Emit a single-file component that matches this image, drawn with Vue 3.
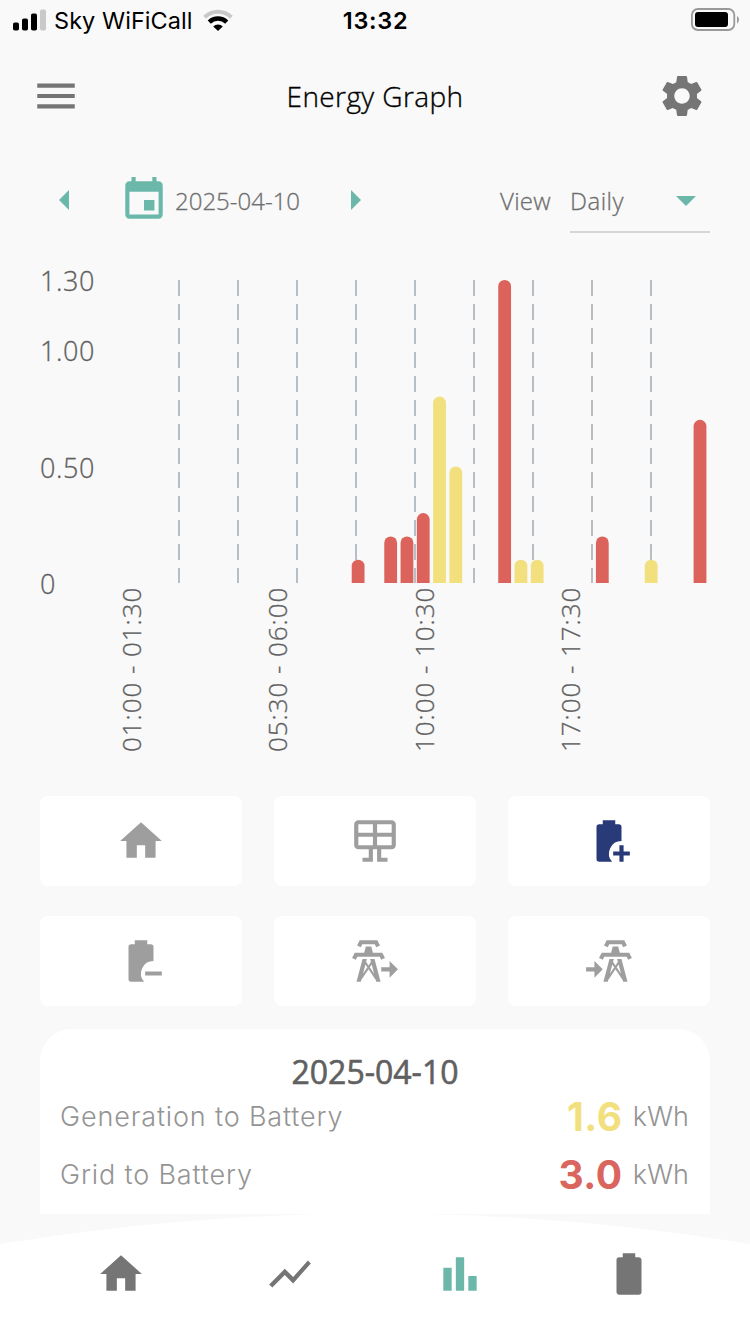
<template>
  <div class="screen">
    <div class="status-bar">
      <div class="carrier">
        <svg class="signal" width="34" height="22" viewBox="0 0 34 22">
          <rect x="0" y="13.5" width="6" height="8" rx="1.8" />
          <rect x="9" y="9.5" width="6" height="12" rx="1.8" />
          <rect x="18" y="4.5" width="6" height="17" rx="1.8" />
          <rect x="27" y="0.5" width="6" height="21" rx="1.8" fill="#c9c9c9" />
        </svg>
        <span class="carrier-name">Sky WiFiCall</span>
        <svg class="wifi" width="30" height="22" viewBox="0 0 30 22">
          <path d="M1.6 8.2A19.2 19.2 0 0 1 28.4 8.2" fill="none" stroke="#c9c9c9" stroke-width="4" />
          <path d="M6.3 13.1A12.4 12.4 0 0 1 23.7 13.1" fill="none" stroke="#000" stroke-width="4.4" />
          <path d="M10.2 17.4A6.8 6.8 0 0 1 19.8 17.4L15 22Z" />
        </svg>
      </div>
      <span class="clock">13:32</span>
      <svg class="battery" width="48" height="24" viewBox="0 0 48 24">
        <rect x="0.9" y="1" width="42.4" height="21" rx="6" fill="none" stroke="#999" stroke-width="1.8" />
        <rect x="4" y="4" width="33" height="15" rx="3" />
        <path d="M46 8C48.6 9.6 48.6 13.8 46 15.4Z" fill="#999" />
      </svg>
    </div>

    <header class="header">
      <button class="icon-button">
        <svg class="icon" viewBox="0 0 24 24"><path :d="icons.menu" /></svg>
      </button>
      <h1>Energy Graph</h1>
      <button class="icon-button">
        <svg class="icon" viewBox="0 0 24 24"><path :d="icons.cog" /></svg>
      </button>
    </header>

    <div class="controls">
      <button class="icon-button arrow" @click="moveDay(-1)">
        <svg width="10" height="20" viewBox="0 0 10 20"><path d="M10 0V20L0 10Z" /></svg>
      </button>
      <div class="date">
        <svg class="icon" viewBox="0 0 24 24"><path :d="icons.calendar" /></svg>
        <span>{{ dateText }}</span>
      </div>
      <button class="icon-button arrow" @click="moveDay(1)">
        <svg width="10" height="20" viewBox="0 0 10 20"><path d="M0 0V20L10 10Z" /></svg>
      </button>
      <span class="view-label">View</span>
      <div class="select">
        <span>Daily</span>
        <svg width="20" height="10" viewBox="0 0 20 10"><path d="M0 0H20L10 10Z" /></svg>
      </div>
    </div>

    <svg class="chart" width="750" height="520" viewBox="0 0 750 520">
      <text v-for="tick in yTicks" :key="tick" x="40" :y="yFor(tick) + 11.3" class="y-label">
        {{ tick === 0 ? '0' : tick.toFixed(2) }}
      </text>
      <line
        v-for="n in 9"
        :key="n"
        :x1="120 + n * 59"
        :x2="120 + n * 59"
        :y1="plotTop"
        :y2="plotBottom"
        class="grid-line"
      />
      <path v-for="bar in bars" :key="bar.slot" :d="barPath(bar)" :class="bar.source" />
      <text
        v-for="label in xLabels"
        :key="label.text"
        :transform="`translate(${slotX(label.slot) + 10.6} 492) rotate(-90)`"
        class="x-label"
      >
        {{ label.text }}
      </text>
    </svg>

    <div class="tiles">
      <button
        v-for="tile in tiles"
        :key="tile"
        :class="['tile', { active: tile === selectedTile }]"
        @click="selectedTile = tile"
      >
        <svg class="icon" viewBox="0 0 24 24"><path fill-rule="evenodd" :d="icons[tile]" /><path v-if="arrows[tile]" :d="arrows[tile]" /></svg>
      </button>
    </div>

    <section class="summary">
      <h2>{{ dateText }}</h2>
      <div v-for="row in totals" :key="row.label" class="row">
        <span class="row-label">{{ row.label }}</span>
        <span :class="['row-value', row.source]">{{ row.value }}</span>
        <span class="row-unit">kWh</span>
      </div>
    </section>

    <svg class="nav-curve" width="750" height="30" viewBox="0 0 750 30">
      <path d="M0 30Q375 -31 750 30Z" fill="#fff" />
    </svg>
    <nav class="nav">
      <button
        v-for="item in navItems"
        :key="item"
        :class="['icon-button', { current: item === currentPage }]"
        @click="currentPage = item"
      >
        <svg class="icon" viewBox="0 0 24 24"><path :d="icons[item]" /></svg>
      </button>
    </nav>
  </div>
</template>

<script setup>
import { ref, computed } from 'vue';

const tower =
  'M8.28,5.45L6.5,4.55L7.76,2H16.23L17.5,4.55L15.72,5.44L15,4H9L8.28,5.45M18.62,8H14.09L13.3,5H10.7L9.91,8H5.38L4.1,10.55L5.89,11.44L6.62,10H17.38L18.1,11.45L19.89,10.56L18.62,8M17.77,22H15.7L15.46,21.1L12,15.9L8.53,21.1L8.3,22H6.23L9.12,11H11.19L10.83,12.35L12,14.1L13.16,12.35L12.81,11H14.88L17.77,22M11.4,15L10.5,13.65L9.32,18.13L11.4,15M14.68,18.12L13.5,13.64L12.6,15L14.68,18.12Z';

// Shift an absolute path sideways, used to make room for the grid arrows
function shiftPath(d, dx) {
  return d.replace(/([MLHV])([\d.]+)(,[\d.]+)?/g, (m, cmd, x, y) =>
    cmd === 'V' ? m : `${cmd}${(Number(x) + dx).toFixed(2)}${y || ''}`
  );
}

const cutBattery =
  'M7.33 4H9V2H15V4H16.67A1.33 1.33 0 0 1 18 5.33V12A6 6 0 0 0 13.53 22H7.33A1.33 1.33 0 0 1 6 20.67V5.33A1.33 1.33 0 0 1 7.33 4Z';

const icons = {
  menu: 'M3,6H21V8H3V6M3,11H21V13H3V11M3,16H21V18H3V16Z',
  cog: 'M19.14 12.94c.04-.3.06-.61.06-.94 0-.32-.02-.64-.07-.94l2.03-1.58c.18-.14.23-.41.12-.61l-1.92-3.32c-.12-.22-.37-.29-.59-.22l-2.39.96c-.5-.38-1.03-.7-1.62-.94l-.36-2.54c-.04-.24-.24-.41-.48-.41h-3.84c-.24 0-.43.17-.47.41l-.36 2.54c-.59.24-1.13.57-1.62.94l-2.39-.96c-.22-.08-.47 0-.59.22L2.74 8.87c-.12.21-.08.47.12.61l2.03 1.58c-.05.3-.09.63-.09.94s.02.64.07.94l-2.03 1.58c-.18.14-.23.41-.12.61l1.92 3.32c.12.22.37.29.59.22l2.39-.96c.5.38 1.03.7 1.62.94l.36 2.54c.05.24.24.41.48.41h3.84c.24 0 .44-.17.47-.41l.36-2.54c.59-.24 1.13-.56 1.62-.94l2.39.96c.22.08.47 0 .59-.22l1.92-3.32c.12-.22.07-.47-.12-.61l-2.01-1.58zM12 15.7c-2.04 0-3.7-1.66-3.7-3.7s1.66-3.7 3.7-3.7 3.7 1.66 3.7 3.7-1.66 3.7-3.7 3.7z',
  calendar: 'M19,19H5V8H19M16,1V3H8V1H6V3H5C3.89,3 3,3.89 3,5V19A2,2 0 0,0 5,21H19A2,2 0 0,0 21,19V5C21,3.89 20.1,3 19,3H18V1M17,12H12V17H17V12Z',
  home: 'M10,20V14H14V20H19V12H22L12,3L2,12H5V20H10Z',
  solar: 'M4,2H20A2,2 0 0,1 22,4V14A2,2 0 0,1 20,16H15V20H18V22H13V16H11V22H6V20H9V16H4A2,2 0 0,1 2,14V4A2,2 0 0,1 4,2M4,4V8H11V4H4M4,14H11V10H4V14M20,14V10H13V14H20M20,4H13V8H20V4Z',
  charge: cutBattery + 'M17 14H19V17H22V19H19V22H17V19H14V17H17Z',
  discharge: cutBattery + 'M14 17H22V19H14Z',
  gridExport: shiftPath(tower, -3.1),
  gridImport: shiftPath(tower, 3.1),
  line: 'M3.5,18.5L9.5,12.5L13.5,16.5L22,6.92L20.59,5.5L13.5,13.5L9.5,9.5L2,17L3.5,18.5Z',
  graph: 'M4 9H8V20H4ZM10 4H14V20H10ZM16 13H20V20H16Z',
  battery: 'M16.67,4H15V2H9V4H7.33A1.33,1.33 0 0,0 6,5.33V20.67C6,21.4 6.6,22 7.33,22H16.67A1.33,1.33 0 0,0 18,20.67V5.33C18,4.6 17.4,4 16.67,4Z',
};

const arrows = {
  gridExport: 'M15 15H19V12L23 16L19 20V17H15Z',
  gridImport: 'M1 15H5V12L9 16L5 20V17H1Z',
};

const tiles = ['home', 'solar', 'charge', 'discharge', 'gridExport', 'gridImport'];
const selectedTile = ref('charge');

const navItems = ['home', 'line', 'graph', 'battery'];
const currentPage = ref('graph');

const date = ref(new Date(Date.UTC(2025, 3, 10)));
const dateText = computed(() => date.value.toISOString().slice(0, 10));

function moveDay(step) {
  const next = new Date(date.value);
  next.setUTCDate(next.getUTCDate() + step);
  date.value = next;
}

const plotTop = 20;
const plotBottom = 323;
const maxValue = 1.3;
const barWidth = 12.8;
const yTicks = [1.3, 1, 0.5, 0];

const bars = [
  { slot: 14, value: 0.1, source: 'grid' },
  { slot: 16, value: 0.2, source: 'grid' },
  { slot: 17, value: 0.2, source: 'grid' },
  { slot: 18, value: 0.3, source: 'grid' },
  { slot: 19, value: 0.8, source: 'generation' },
  { slot: 20, value: 0.5, source: 'generation' },
  { slot: 23, value: 1.3, source: 'grid' },
  { slot: 24, value: 0.1, source: 'generation' },
  { slot: 25, value: 0.1, source: 'generation' },
  { slot: 29, value: 0.2, source: 'grid' },
  { slot: 32, value: 0.1, source: 'generation' },
  { slot: 35, value: 0.7, source: 'grid' },
];

const xLabels = [
  { slot: 0, text: '01:00 - 01:30' },
  { slot: 9, text: '05:30 - 06:00' },
  { slot: 18, text: '10:00 - 10:30' },
  { slot: 27, text: '17:00 - 17:30' },
];

const totals = [
  { label: 'Generation to Battery', value: '1.6', source: 'generation' },
  { label: 'Grid to Battery', value: '3.0', source: 'grid' },
];

function yFor(value) {
  return plotBottom - (value / maxValue) * (plotBottom - plotTop);
}

function slotX(slot) {
  return 130.2 + slot * 16.28;
}

function barPath(bar) {
  const left = slotX(bar.slot) - barWidth / 2;
  const r = barWidth / 2;
  return `M${left} ${plotBottom}V${yFor(bar.value) + r}a${r} ${r} 0 0 1 ${barWidth} 0V${plotBottom}Z`;
}
</script>

<style>
body {
  background-color: #f9f9f9;
}
</style>

<style scoped>
.screen {
  width: 750px;
  height: 1334px;
  overflow: hidden;
  display: flex;
  flex-direction: column;
  background-color: #f9f9f9;
  font-family: "Open Sans", sans-serif;
  font-weight: 300;
  color: #6e6e6e;
}

button {
  padding: 0;
  border: none;
  background: none;
  cursor: pointer;
}

.icon {
  display: block;
  width: 50px;
  height: 50px;
  fill: currentColor;
}

.icon-button {
  color: #757575;
}

.status-bar {
  display: grid;
  grid-template-columns: 1fr auto 1fr;
  align-items: center;
  height: 40px;
  padding: 0 11px 0 13px;
  font-family: Inter, sans-serif;
  color: #000;
}

.carrier {
  display: flex;
  align-items: center;
}

.carrier-name {
  margin: 2px 10px 0 7px;
  font-size: 23.5px;
  font-weight: 400;
  line-height: 30px;
  letter-spacing: 0.05px;
}

.clock {
  margin: 2px 1px 0 0;
  font-size: 23.5px;
  font-weight: 600;
  line-height: 30px;
  letter-spacing: 0.7px;
}

.battery {
  justify-self: end;
}

.header {
  display: flex;
  justify-content: space-between;
  align-items: center;
  height: 112px;
  padding: 0 43px 0 31px;
}

.header h1 {
  margin: 0 0 0 12px;
  font-size: 28px;
  font-weight: 300;
  letter-spacing: 0.4px;
  color: #000;
  -webkit-text-stroke: 0.35px #000;
}

.controls {
  display: flex;
  align-items: center;
  height: 96px;
  padding: 0 40px 0 59px;
  font-size: 24px;
  -webkit-text-stroke: 0.3px #6e6e6e;
}

.controls svg {
  display: block;
  fill: #6bb8aa;
}

.date {
  display: flex;
  align-items: center;
  width: 232px;
  margin-left: 50px;
}

.date span {
  margin: 1px 0 0 6px;
}

.view-label {
  margin: 1px 19px 0 auto;
  letter-spacing: 0.3px;
}

.select {
  display: flex;
  align-items: center;
  justify-content: space-between;
  box-sizing: border-box;
  width: 140px;
  height: 65px;
  padding: 3px 14px 0 0;
  border-bottom: 2px solid #d6d6d6;
  letter-spacing: 0.5px;
}

.chart {
  display: block;
  flex: none;
  margin-top: 12px;
}

.y-label,
.x-label {
  font-size: 27px;
  letter-spacing: 0.6px;
  fill: #606060;
  stroke: #606060;
  stroke-width: 0.3px;
}

.x-label {
  font-size: 26px;
  letter-spacing: 0.95px;
}

.grid-line {
  stroke: #b0b8be;
  stroke-width: 1.8;
  stroke-dasharray: 16 8;
}

path.grid {
  fill: #db635c;
}

path.generation {
  fill: #f2df7e;
}

.tiles {
  display: grid;
  grid-template-columns: repeat(3, 1fr);
  grid-auto-rows: 90px;
  gap: 30px 32px;
  margin: 16px 40px 0;
}

.tile {
  display: flex;
  align-items: center;
  justify-content: center;
  border-radius: 8px;
  background-color: #fff;
  color: #9e9e9e;
}

.tile.active {
  color: #283a78;
}

.summary {
  box-sizing: border-box;
  height: 185px;
  margin: 23px 40px 0;
  padding: 20px 21px 0;
  border-radius: 32px 32px 0 0;
  background-color: #fff;
  font-family: Inter, sans-serif;
}

.summary h2 {
  margin: 0 0 -1px;
  font-family: "Open Sans", sans-serif;
  font-size: 32px;
  font-weight: 400;
  line-height: 45px;
  text-align: center;
  color: #606060;
  -webkit-text-stroke: 0.6px #606060;
}

.row {
  display: flex;
  align-items: center;
  height: 48px;
  margin-bottom: 10px;
  line-height: 48px;
  font-size: 27px;
  font-weight: 350;
  color: #949494;
}

.row-label {
  margin-left: -1px;
  letter-spacing: 0.85px;
}

.row-value {
  margin-left: auto;
  font-size: 39px;
  font-weight: 650;
  letter-spacing: 0.6px;
}

.row-value.generation {
  color: #f2df7e;
}

.row-value.grid {
  color: #d9655e;
}

.row-unit {
  margin-left: 10px;
}

.nav-curve {
  display: block;
  flex: none;
}

.nav {
  display: flex;
  flex: 1;
  padding: 5px 36px 0;
  background-color: #fff;
}

.nav .icon-button {
  display: flex;
  flex: 1;
  justify-content: center;
  align-items: flex-start;
}

.nav .current {
  color: #6bb8aa;
}
</style>
